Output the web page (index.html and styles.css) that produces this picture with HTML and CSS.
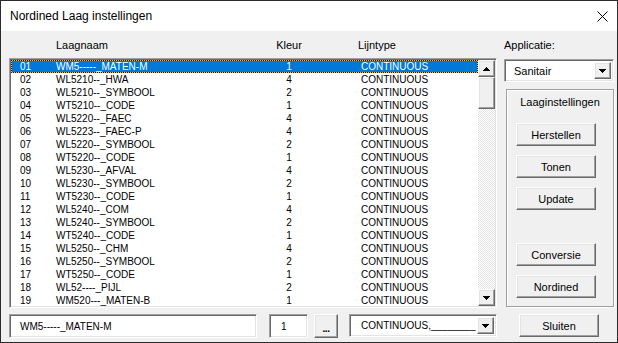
FILE: index.html
```html
<!DOCTYPE html>
<html>
<head>
<meta charset="utf-8">
<title>Nordined Laag instellingen</title>
<link rel="stylesheet" href="styles.css">
</head>
<body>
<div class="window">
  <div class="titlebar">
    <span class="title">Nordined Laag instellingen</span>
    <svg class="close" width="11" height="11" viewBox="0 0 11 11"><path d="M0.5 0.5L10.5 10.5M10.5 0.5L0.5 10.5" stroke="#000" stroke-width="1" fill="none"/></svg>
  </div>
  <div class="body">
    <div class="left">
      <div class="cols header">
        <span></span><span>Laagnaam</span><span class="k">Kleur</span><span class="l">Lijntype</span>
      </div>
      <div class="listbox">
        <div class="rows">
          <div class="cols row sel"><span class="n">01</span><span>WM5-----_MATEN-M</span><span class="k">1</span><span class="l">CONTINUOUS</span></div>
          <div class="cols row"><span class="n">02</span><span>WL5210--_HWA</span><span class="k">4</span><span class="l">CONTINUOUS</span></div>
          <div class="cols row"><span class="n">03</span><span>WL5210--_SYMBOOL</span><span class="k">2</span><span class="l">CONTINUOUS</span></div>
          <div class="cols row"><span class="n">04</span><span>WT5210--_CODE</span><span class="k">1</span><span class="l">CONTINUOUS</span></div>
          <div class="cols row"><span class="n">05</span><span>WL5220--_FAEC</span><span class="k">4</span><span class="l">CONTINUOUS</span></div>
          <div class="cols row"><span class="n">06</span><span>WL5223--_FAEC-P</span><span class="k">4</span><span class="l">CONTINUOUS</span></div>
          <div class="cols row"><span class="n">07</span><span>WL5220--_SYMBOOL</span><span class="k">2</span><span class="l">CONTINUOUS</span></div>
          <div class="cols row"><span class="n">08</span><span>WT5220--_CODE</span><span class="k">1</span><span class="l">CONTINUOUS</span></div>
          <div class="cols row"><span class="n">09</span><span>WL5230--_AFVAL</span><span class="k">4</span><span class="l">CONTINUOUS</span></div>
          <div class="cols row"><span class="n">10</span><span>WL5230--_SYMBOOL</span><span class="k">2</span><span class="l">CONTINUOUS</span></div>
          <div class="cols row"><span class="n">11</span><span>WT5230--_CODE</span><span class="k">1</span><span class="l">CONTINUOUS</span></div>
          <div class="cols row"><span class="n">12</span><span>WL5240--_COM</span><span class="k">4</span><span class="l">CONTINUOUS</span></div>
          <div class="cols row"><span class="n">13</span><span>WL5240--_SYMBOOL</span><span class="k">2</span><span class="l">CONTINUOUS</span></div>
          <div class="cols row"><span class="n">14</span><span>WT5240--_CODE</span><span class="k">1</span><span class="l">CONTINUOUS</span></div>
          <div class="cols row"><span class="n">15</span><span>WL5250--_CHM</span><span class="k">4</span><span class="l">CONTINUOUS</span></div>
          <div class="cols row"><span class="n">16</span><span>WL5250--_SYMBOOL</span><span class="k">2</span><span class="l">CONTINUOUS</span></div>
          <div class="cols row"><span class="n">17</span><span>WT5250--_CODE</span><span class="k">1</span><span class="l">CONTINUOUS</span></div>
          <div class="cols row"><span class="n">18</span><span>WL52----_PIJL</span><span class="k">2</span><span class="l">CONTINUOUS</span></div>
          <div class="cols row"><span class="n">19</span><span>WM520---_MATEN-B</span><span class="k">1</span><span class="l">CONTINUOUS</span></div>
        </div>
        <div class="vscroll">
          <div class="raised sbtn"><svg width="7" height="4" viewBox="0 0 7 4"><rect x="3" y="0" width="1" height="1"/><rect x="2" y="1" width="3" height="1"/><rect x="1" y="2" width="5" height="1"/><rect x="0" y="3" width="7" height="1"/></svg></div>
          <div class="raised thumb"></div>
          <div class="track"></div>
          <div class="raised sbtn"><svg width="7" height="4" viewBox="0 0 7 4"><rect x="0" y="0" width="7" height="1"/><rect x="1" y="1" width="5" height="1"/><rect x="2" y="2" width="3" height="1"/><rect x="3" y="3" width="1" height="1"/></svg></div>
        </div>
      </div>
      <div class="bottom">
        <div class="sunken f-name">WM5-----_MATEN-M</div>
        <div class="sunken f-num">1</div>
        <div class="raised btn dots">...</div>
        <div class="sunken combo c-lt">
          <span class="ctext">CONTINUOUS,________</span>
          <div class="raised dd"><svg width="7" height="4" viewBox="0 0 7 4"><rect x="0" y="0" width="7" height="1"/><rect x="1" y="1" width="5" height="1"/><rect x="2" y="2" width="3" height="1"/><rect x="3" y="3" width="1" height="1"/></svg></div>
        </div>
      </div>
    </div>
    <div class="right">
      <div class="label">Applicatie:</div>
      <div class="sunken combo c-app">
        <span class="ctext">Sanitair</span>
        <div class="raised dd"><svg width="7" height="4" viewBox="0 0 7 4"><rect x="0" y="0" width="7" height="1"/><rect x="1" y="1" width="5" height="1"/><rect x="2" y="2" width="3" height="1"/><rect x="3" y="3" width="1" height="1"/></svg></div>
      </div>
      <div class="group">
        <div class="gtitle">Laaginstellingen</div>
        <div class="raised btn gbtn first">Herstellen</div>
        <div class="raised btn gbtn">Tonen</div>
        <div class="raised btn gbtn">Update</div>
        <div class="raised btn gbtn spaced">Conversie</div>
        <div class="raised btn gbtn">Nordined</div>
      </div>
      <div class="raised btn sluiten">Sluiten</div>
    </div>
  </div>
</div>
</body>
</html>
```

FILE: styles.css
```css
html, body {
  margin: 0;
  padding: 0;
  background: #f0f0f0;
}

.window {
  width: 618px;
  height: 343px;
  box-sizing: border-box;
  border: 1px solid #2b2b2b;
  background: #f0f0f0;
  display: flex;
  flex-direction: column;
  font-family: "Liberation Sans", Arial, sans-serif;
  color: #000;
  overflow: hidden;
}

.titlebar {
  flex: none;
  height: 30px;
  background: #fff;
  display: flex;
  align-items: center;
  justify-content: space-between;
  padding: 0 9px 0 9px;
}

.title {
  font-size: 12px;
}

.close {
  display: block;
  margin-top: 1px;
}

.body {
  display: flex;
  gap: 7px;
  padding-left: 8px;
}

.left {
  width: 488px;
  display: flex;
  flex-direction: column;
}

.cols {
  display: grid;
  grid-template-columns: 45px 204px 58px 1fr;
}

.header {
  height: 27px;
  box-sizing: border-box;
  padding: 8px 0 0 2px;
  font-size: 11px;
  line-height: 13px;
}

.header .k {
  text-align: center;
}

.header .l {
  padding-left: 40px;
}

/* 3D borders */
.raised {
  box-sizing: border-box;
  background: #f0f0f0;
  border: 1px solid;
  border-color: #fff #696969 #696969 #fff;
  box-shadow: inset -1px -1px 0 #a0a0a0, inset 1px 1px 0 #e3e3e3;
}

.sunken {
  box-sizing: border-box;
  background: #fff;
  border: 1px solid;
  border-color: #a0a0a0 #fff #fff #a0a0a0;
  box-shadow: inset 1px 1px 0 #696969, inset -1px -1px 0 #e3e3e3;
}

.listbox {
  height: 250px;
  box-sizing: border-box;
  display: flex;
  background: #fff;
  border: 1px solid;
  border-color: #a0a0a0 #fff #fff #a0a0a0;
  box-shadow: inset 1px 1px 0 #696969, inset -1px -1px 0 #e3e3e3;
  padding: 1px;
}

.rows {
  flex: 1;
  overflow: hidden;
  font-size: 10px;
  line-height: 13px;
}

.row {
  height: 13px;
  white-space: nowrap;
}

.row .n {
  padding-left: 9px;
}

.row .k {
  text-align: center;
}

.row .l {
  padding-left: 43px;
}

.row.sel {
  background: #0078d7;
  color: #fff;
  outline: 1px dotted #1a1a1a;
  outline-offset: -1px;
  box-shadow: inset 0 0 0 1px #e9b66a;
}

.vscroll {
  flex: none;
  width: 17px;
  display: flex;
  flex-direction: column;
}

.sbtn {
  height: 17px;
  display: flex;
  align-items: center;
  justify-content: center;
}

.thumb {
  height: 32px;
}

.track {
  flex: 1;
  background-color: #fff;
  background-image: repeating-conic-gradient(#e4e4e4 0 25%, #fff 0 50%);
  background-size: 2px 2px;
}

svg rect {
  fill: #000;
}

.bottom {
  display: flex;
  margin-top: 6px;
  height: 24px;
  font-size: 10px;
}

.f-name {
  width: 248px;
  padding-left: 10px;
  display: flex;
  align-items: center;
}

.f-num {
  width: 39px;
  margin-left: 12px;
  padding-left: 11px;
  display: flex;
  align-items: center;
}

.btn {
  display: flex;
  align-items: center;
  justify-content: center;
  font-size: 11px;
}

.dots {
  width: 24px;
  margin-left: 6px;
  font-weight: bold;
  font-size: 10px;
  padding-top: 5px;
  letter-spacing: -0.5px;
}

.combo {
  display: flex;
  align-items: stretch;
  padding: 2px;
}

.ctext {
  flex: 1;
  display: flex;
  align-items: center;
  white-space: nowrap;
  overflow: hidden;
}

.dd {
  flex: none;
  width: 17px;
  display: flex;
  align-items: center;
  justify-content: center;
}

.c-lt {
  width: 148px;
  height: 23px;
  margin-left: 11px;
  padding-left: 11px;
  font-size: 10px;
}

.right {
  width: 110px;
  display: flex;
  flex-direction: column;
  align-items: flex-start;
}

.label {
  height: 27px;
  box-sizing: border-box;
  padding-top: 8px;
  font-size: 11px;
  line-height: 13px;
}

.c-app {
  width: 110px;
  height: 23px;
  margin-top: 1px;
  padding-left: 9px;
  font-size: 11px;
}

.group {
  width: 108px;
  height: 218px;
  box-sizing: border-box;
  margin: 7px 0 0 2px;
  border: 1px solid #a0a0a0;
  box-shadow: inset 1px 1px 0 #fff, 1px 1px 0 #fff;
  display: flex;
  flex-direction: column;
  align-items: flex-start;
}

.gtitle {
  align-self: stretch;
  text-align: center;
  font-size: 11px;
  line-height: 13px;
  margin-top: 6px;
}

.gbtn {
  width: 80px;
  height: 23px;
  margin: 9px 0 0 9px;
}

.gbtn.first {
  margin-top: 14px;
}

.gbtn.spaced {
  margin-top: 33px;
}

.sluiten {
  width: 80px;
  height: 23px;
  margin: 7px 0 0 15px;
}
```
